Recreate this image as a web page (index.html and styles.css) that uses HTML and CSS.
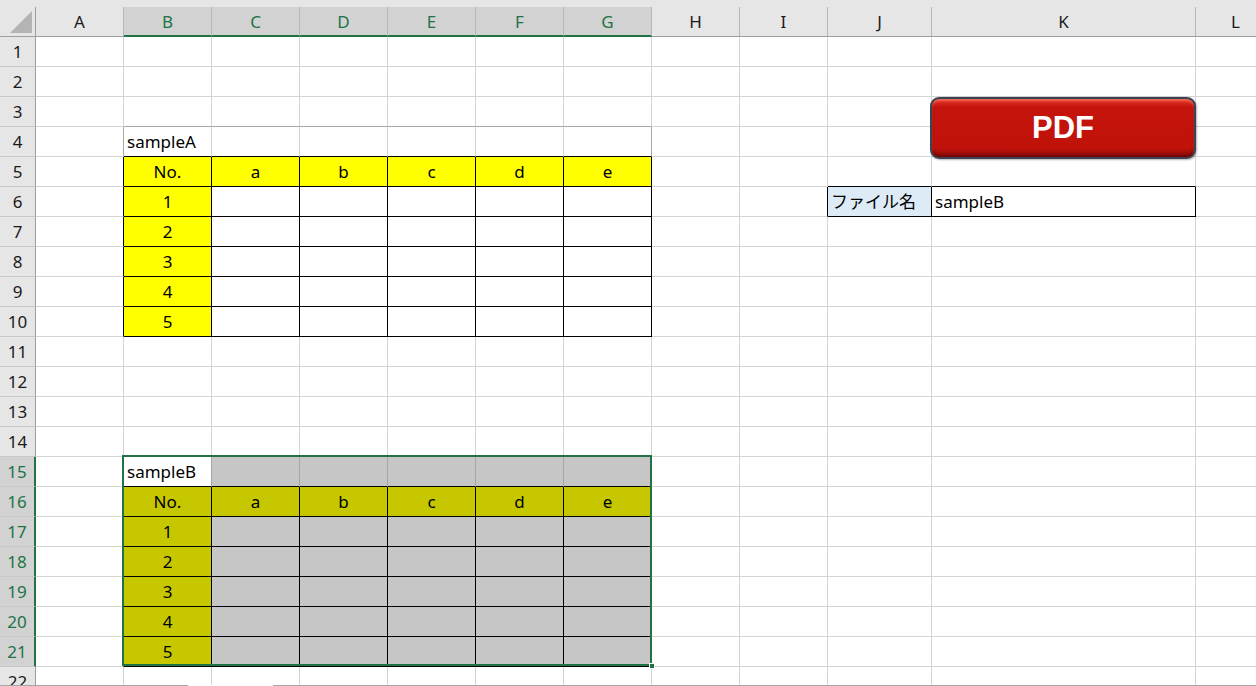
FILE: index.html
```html
<!DOCTYPE html>
<html lang="ja">
<head>
    <meta charset="UTF-8">
    <meta name="viewport" content="width=device-width, initial-scale=1.0">
    <title>Book1 - Excel</title>
    <link rel="stylesheet" href="styles.css">
</head>
<body>
    <div class="sheet">
        <div class="top-strip"></div>
        <div class="grid" id="grid">
            <!-- as células são geradas pelo script abaixo -->
        </div>

        <!-- botão de macro sobre a planilha -->
        <div class="pdf-btn">PDF</div>

        <!-- seleção atual B15:G21 -->
        <div class="selection">
            <div class="fill-handle"></div>
        </div>
    </div>
    <div class="tab-line"><span class="tab-gap"></span></div>

    <script>
        const colNames = ['A', 'B', 'C', 'D', 'E', 'F', 'G', 'H', 'I', 'J', 'K', 'L'];
        const texts = { B4: 'sampleA', B15: 'sampleB', J6: 'ファイル名', K6: 'sampleB' };
        const leftAligned = ['B4', 'B15', 'J6', 'K6'];

        ['No.', 'a', 'b', 'c', 'd', 'e'].forEach((t, i) => {
            texts[colNames[i + 1] + '5'] = t;
            texts[colNames[i + 1] + '16'] = t;
        });
        for (let n = 1; n <= 5; n++) {
            texts['B' + (n + 5)] = n;
            texts['B' + (n + 16)] = n;
        }

        // cor de fundo de cada célula (c: 1 = A)
        function fill(r, c) {
            if (c >= 2 && c <= 7) {
                if (r === 5 || (c === 2 && r >= 6 && r <= 10)) return 'yellow';
                if (r === 16 || (c === 2 && r >= 17 && r <= 21)) return 'olive';
                if (r >= 15 && r <= 21 && !(r === 15 && c === 2)) return 'shade';
            }
            if (r === 6 && c === 10) return 'blue';
            return '';
        }

        // borda direita
        function rightEdge(r, c) {
            if (c <= 7 && ((r >= 5 && r <= 10) || (r >= 16 && r <= 21))) return 'rk';
            if (r === 6 && c >= 9 && c <= 11) return 'rk';
            if (r === 4 && (c === 1 || c === 7)) return 'rg';
            if (r === 15 && c >= 2 && c <= 6) return 'rs';
            return '';
        }

        // borda inferior
        function bottomEdge(r, c) {
            if (c >= 2 && c <= 7 && ((r >= 4 && r <= 10) || (r >= 15 && r <= 21))) return 'bk';
            if (c >= 10 && c <= 11 && (r === 5 || r === 6)) return 'bk';
            if (c >= 2 && c <= 7 && r === 3) return 'bg';
            return '';
        }

        function montarGrade() {
            let html = '<div class="cell corner"><svg width="36" height="30"><polygon points="10,26 32,26 32,4" fill="#b4b4b4"/></svg></div>';
            colNames.forEach((name, i) => {
                const sel = (i >= 1 && i <= 6) ? ' sel' : '';
                html += `<div class="cell col-head${sel}">${name}</div>`;
            });
            for (let r = 1; r <= 22; r++) {
                const sel = (r >= 15 && r <= 21) ? ' sel' : '';
                html += `<div class="cell row-head${sel}">${r}</div>`;
                for (let c = 1; c <= 12; c++) {
                    const key = colNames[c - 1] + r;
                    const cls = ['cell', fill(r, c), rightEdge(r, c), bottomEdge(r, c)];
                    if (leftAligned.includes(key)) cls.push('left');
                    const t = texts[key] !== undefined ? texts[key] : '';
                    html += `<div class="${cls.filter(Boolean).join(' ')}">${t}</div>`;
                }
            }
            document.getElementById('grid').innerHTML = html;
        }

        montarGrade();
    </script>
</body>
</html>
```

FILE: styles.css
```css
body {
    margin: 0;
    overflow: hidden;
    background-color: #fff;
    font-family: "Noto Sans", "Noto Sans CJK JP", sans-serif;
    font-size: 17px;
    color: #000;
}
.sheet {
    position: relative;
    height: 685px;
    overflow: hidden;
}
.top-strip {
    height: 7px;
    background-color: #e6e6e6;
}
.grid {
    display: grid;
    grid-template-columns: 36px repeat(9, 88px) 104px 264px 80px;
    grid-template-rows: repeat(23, 30px);
}
.cell {
    box-sizing: border-box;
    border-right: 1px solid #d4d4d4;
    border-bottom: 1px solid #d4d4d4;
    display: flex;
    align-items: center;
    justify-content: center;
    white-space: nowrap;
    overflow: hidden;
    line-height: 1;
}
.cell.left {
    justify-content: flex-start;
    padding-left: 3px;
}
.corner {
    background-color: #e6e6e6;
    border-right-color: #9e9e9e;
    border-bottom-color: #9e9e9e;
}
.corner svg {
    display: block;
}
.col-head {
    background-color: #e6e6e6;
    border-right-color: #b6b6b6;
    border-bottom-color: #9e9e9e;
    color: #1a1a1a;
}
.col-head.sel {
    background-color: #d2d2d2;
    color: #217346;
    border-bottom: 2px solid #217346;
}
.row-head {
    background-color: #e6e6e6;
    border-right-color: #9e9e9e;
    border-bottom-color: #c8c8c8;
    color: #1a1a1a;
}
.row-head.sel {
    background-color: #d2d2d2;
    color: #217346;
    border-right: 2px solid #217346;
}

/* preenchimentos */
.yellow { background-color: #ffff00; }
.olive { background-color: #c7c700; }
.shade { background-color: #c6c6c6; }
.blue { background-color: #ddebf7; }

/* bordas das tabelas */
.rk { border-right-color: #000; }
.bk { border-bottom-color: #000; }
.rg { border-right-color: #a6a6a6; }
.bg { border-bottom-color: #a6a6a6; }
.rs { border-right-color: #a5a5a5; }

.pdf-btn {
    position: absolute;
    left: 930px;
    top: 97px;
    width: 266px;
    height: 62px;
    box-sizing: border-box;
    border: 2px solid #3d4352;
    border-radius: 9px;
    background: linear-gradient(#e53a2c 0, #c5140b 14%, #c0120a 84%, #940c07 100%);
    box-shadow: inset 0 2px 2px rgba(255, 150, 130, 0.5), inset 0 -2px 3px rgba(60, 0, 0, 0.5), 1px 1px 2px rgba(0, 0, 0, 0.3);
    color: #fff;
    font-family: "Liberation Sans", Arial, sans-serif;
    font-weight: bold;
    font-size: 31px;
    display: flex;
    align-items: center;
    justify-content: center;
}
.selection {
    position: absolute;
    left: 122px;
    top: 455px;
    width: 530px;
    height: 211px;
    box-sizing: border-box;
    border: 2px solid #217346;
    pointer-events: none;
}
.fill-handle {
    position: absolute;
    left: 525px;
    top: 206px;
    width: 4px;
    height: 4px;
    background-color: #217346;
    border: 1px solid #fff;
}
.tab-line {
    display: flex;
    height: 1px;
    background-color: #a6a6a6;
}
.tab-gap {
    margin-left: 188px;
    width: 85px;
    background-color: #fff;
}
```
